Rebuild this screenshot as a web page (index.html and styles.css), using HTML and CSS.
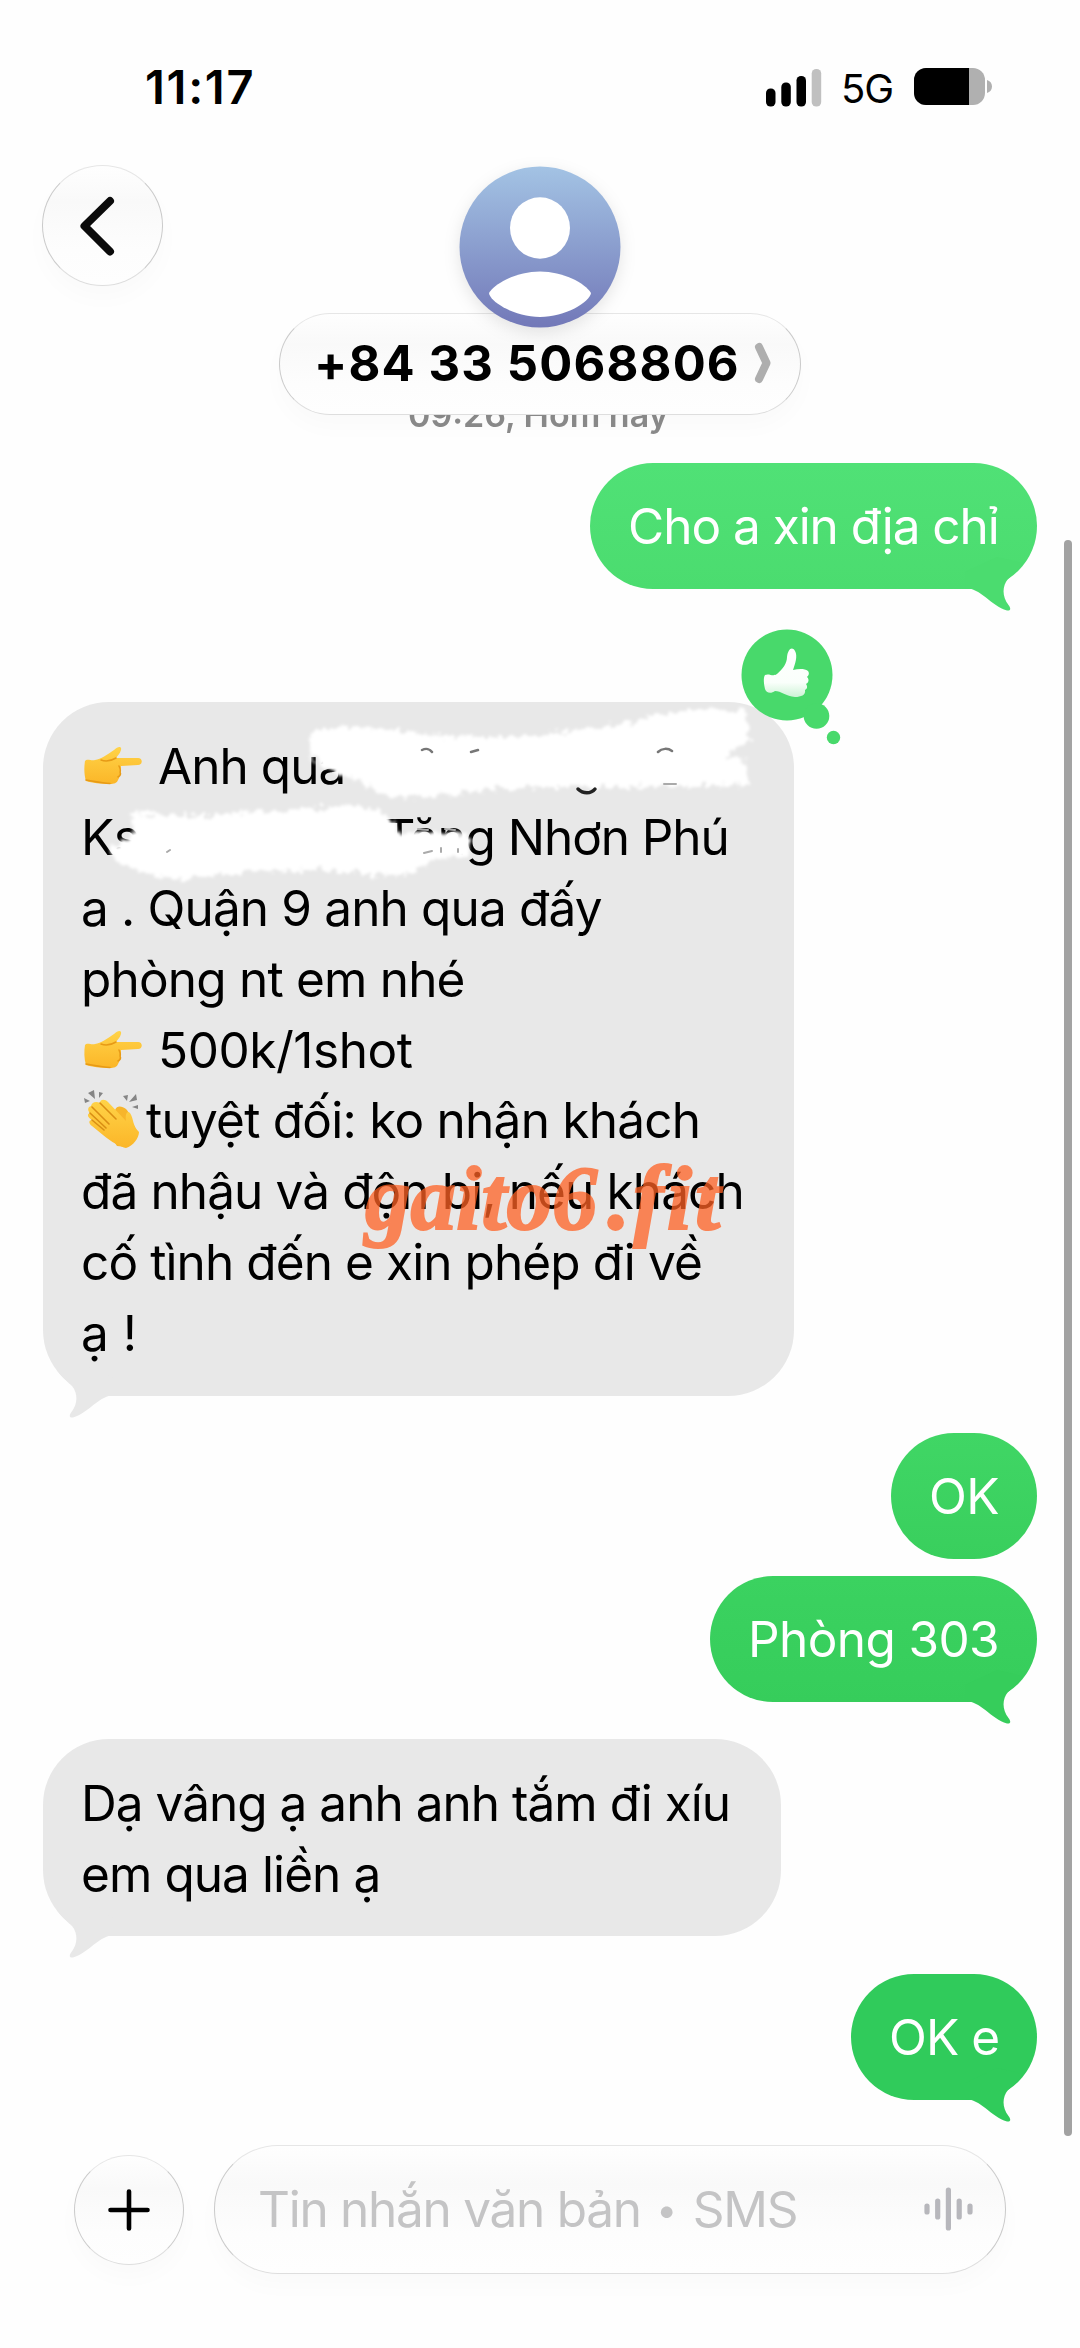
FILE: index.html
```html
<!DOCTYPE html>
<html lang="vi">
<head>
<meta charset="utf-8">
<title>Tin nhắn</title>
<link rel="stylesheet" href="styles.css">
</head>
<body>
<svg class="defs" width="0" height="0" aria-hidden="true">
  <defs>
    <linearGradient id="skin" x1="0" y1="0" x2="0" y2="1"><stop offset="0" stop-color="#ffd348"/><stop offset="1" stop-color="#fbb628"/></linearGradient>
    <linearGradient id="thumb" x1="0" y1="0" x2="0" y2="1"><stop offset="0" stop-color="#fff"/><stop offset=".7" stop-color="#fafffb"/><stop offset="1" stop-color="#cdf3d6"/></linearGradient>
    <linearGradient id="avatar" x1="0" y1="0" x2="0" y2="1"><stop offset="0" stop-color="#a3c3e4"/><stop offset="1" stop-color="#7278b8"/></linearGradient>
    <filter id="rough" x="-5%" y="-20%" width="110%" height="140%"><feTurbulence type="fractalNoise" baseFrequency=".13" numOctaves="3" seed="4"/><feDisplacementMap in="SourceGraphic" scale="15" xChannelSelector="R" yChannelSelector="G"/><feGaussianBlur stdDeviation="1.5"/></filter>
    <g id="tail"><path d="M8 36C24 36 34 54 50 58.5C54 59.300 54 56 51.500 53C45 45 45 34 51 27C56 22 62 18 66 11L40 5L8 20Z"/></g>
    <g id="point">
      <path fill="url(#skin)" d="M2 15C4 12 8 15 12 14C18 13 24 9 31 4C35 0 39 0 38 4C37 8 34 10 33 12H55C60 12 60 19 55 19L38 20C38 25 38 29 35 34C34 37 31 38 27 38C18 38 9 37 3 35C1 29 1 21 2 15Z"/>
      <path fill="none" stroke="#e79a16" stroke-width="1.500" stroke-linecap="round" d="M18 14C23 16 28 15 33 12M36 20C37 22 38 24 37 26C38 28 37 30 35 31M3 34C10 35 18 37 27 37.500"/>
    </g>
  </defs>
</svg>
<main class="phone">
  <div class="status">
    <span class="time">11:17</span>
    <div class="status-right">
      <svg class="signal" width="56" height="38" viewBox="0 0 56 38"><rect x="0" y="19.500" width="9.500" height="18" rx="4.500"/><rect x="15.300" y="13.500" width="9.500" height="24" rx="4.500"/><rect x="30.500" y="7" width="9.500" height="30.500" rx="4.500"/><rect x="45.700" y="0" width="9.500" height="37.500" rx="4.500" fill="#c0c0c0"/></svg>
      <span class="network">5G</span>
      <svg class="battery" width="80" height="37" viewBox="0 0 80 37"><rect width="71" height="37" rx="12" fill="#b0b0b0"/><path d="M12 0H55V37H12A12 12 0 0 1 0 25V12A12 12 0 0 1 12 0Z"/><path fill="#b0b0b0" d="M73 12C76 13 78 15 78 18.500S76 24 73 25Z"/></svg>
    </div>
  </div>
  <header class="header">
    <button class="glass back" aria-label="Quay lại"><svg width="40" height="62" viewBox="0 0 40 62"><path d="M31 6L5.500 31L31 56.500" fill="none" stroke="#0b0b0b" stroke-width="8" stroke-linecap="round" stroke-linejoin="round"/></svg></button>
    <div class="contact">
      <svg class="avatar" width="162" height="162" viewBox="0 0 162 162"><circle cx="81" cy="81" r="80.500" fill="url(#avatar)"/><ellipse cx="81" cy="62" rx="30" ry="30.700" fill="#fff"/><path fill="#fff" d="M30 127C36 117 58 105.500 81 105.500S126 117 132 127C131 136 106 151 81 151S31 136 30 127Z"/></svg>
      <div class="glass name"><span class="number">+84 33 5068806</span><svg width="18" height="42" viewBox="0 0 18 42"><path d="M5 5L12.500 21L5 37" fill="none" stroke="#aeaeae" stroke-width="8" stroke-linecap="round" stroke-linejoin="round"/></svg></div>
    </div>
  </header>
  <div class="stamp"><span>09:26, Hôm nay</span></div>
  <section class="thread">
    <div class="bubble sent s1"><span class="line l-cho">Cho a xin địa chỉ</span><svg class="tail" viewBox="0 0 80 60"><use href="#tail"/></svg></div>
    <div class="bubble got g1">
      <span class="line"><svg class="emoji" width="60" height="40" viewBox="0 0 60 40"><use href="#point"/></svg><span class="l1">Anh qua</span></span>
      <span class="line"><span class="l2a">Ks</span><span class="l2b">Tăng Nhơn Phú</span></span>
      <span class="line"><span class="l3">a . Quận 9 anh qua đấy</span></span>
      <span class="line"><span class="l4">phòng nt em nhé</span></span>
      <span class="line"><svg class="emoji" width="60" height="40" viewBox="0 0 60 40"><use href="#point"/></svg><span class="l5">500k/1shot</span></span>
      <span class="line"><svg class="emoji clap" width="60" height="60" viewBox="0 0 60 60">
        <path fill="#858585" d="M1 8L7 11L2 13ZM5 3L11 0L12 9ZM16 2L20 3L16 8ZM40 6L45 5L44 11ZM53 4L54 10L46 12ZM49 17L55 15V19Z"/>
        <path fill="#f7b52b" d="M32 20C34 15 39 16 43 19C48 24 48 33 55 42L44 57L34 56L30 50Z"/>
        <path fill="url(#skin)" d="M8 16C9 12 13 11 17 13C17 9 22 9 25 12L43 31C42 24 44 20 47 23C51 29 49 35 56 42C56 48 50 56 43 58C38 57 28 52 20 45L9 36C5 33 6 30 9 30C4 27 4 24 7 23C4 20 5 17 8 16Z"/>
        <path fill="none" stroke="#d98e14" stroke-width="1.600" stroke-linecap="round" d="M9 17L26 34M17 13L33 29M7 23L23 38M9 30L21 40"/></svg><span class="l6">tuyệt đối: ko nhận khách</span></span>
      <span class="line"><span class="l7">đã nhậu và độn bi, nếu khách</span></span>
      <span class="line"><span class="l8">cố tình đến e xin phép đi về</span></span>
      <span class="line"><span class="l9">ạ !</span></span>
      <svg class="tail" viewBox="0 0 80 60"><use href="#tail"/></svg>
      <svg class="scribble" width="751" height="200" viewBox="43 702 751 200">
        <g filter="url(#rough)" fill="#fff">
          <path d="M310 732C334 722 385 728 440 735C500 741 560 732 630 722C665 708 715 708 748 712L750 740L725 756L748 762V785C690 787 640 786 560 787C500 788 460 792 420 797C385 800 372 794 366 782C350 776 330 775 312 757Z"/>
          <path d="M130 812C170 820 260 812 345 806C375 803 392 815 396 832L468 834L470 856L430 860C415 876 390 880 350 872C290 866 230 874 172 880C145 872 116 868 108 850C121 842 134 838 134 832Z"/>
        </g>
        <g fill="none" stroke="#222" stroke-linecap="round" stroke-width="3.500"><path d="M578 789C583 794 591 794 595 789"/><path stroke="#777" stroke-width="2.500" d="M658 752C662 748 668 748 672 751M422 750C426 748 430 749 432 752M471 752L478 750"/><path stroke="#aaa" stroke-width="2" d="M418 829L428 830M445 829L455 830M424 853L432 851M441 852V848M458 852V849M167 852L170 850M664 784H676"/></g>
      </svg>
      <svg class="reaction" width="100" height="116" viewBox="0 0 100 116"><g fill="#48d96b"><circle cx="46" cy="46" r="45.500"/><circle cx="75.500" cy="87" r="12.800"/><circle cx="92.500" cy="108.500" r="6.700"/></g><path fill="url(#thumb)" d="M24 46C28 44 32 48 36 45C42 40 46 34 46 28C47 20 51 17 54 22C57 27 54 35 52 41C57 40 63 39 67 42C69 45 67 47 66 48C69 51 67 54 65 55C67 58 66 60 64 61C65 66 60 68 54 68C45 67 40 62 34 62C30 65 25 64 24 60C23 55 22 49 24 46Z"/></svg>
      <span class="watermark">gaito6<span class="suffix">.fit</span></span>
    </div>
    <div class="bubble sent s2"><span class="line l-ok">OK</span></div>
    <div class="bubble sent s3"><span class="line l-ph">Phòng 303</span><svg class="tail" viewBox="0 0 80 60"><use href="#tail"/></svg></div>
    <div class="bubble got g2"><span class="line"><span class="m1">Dạ vâng ạ anh anh tắm đi xíu</span></span><span class="line"><span class="m2">em qua liền ạ</span></span><svg class="tail" viewBox="0 0 80 60"><use href="#tail"/></svg></div>
    <div class="bubble sent s4"><span class="line l-oke">OK e</span><svg class="tail" viewBox="0 0 80 60"><use href="#tail"/></svg></div>
  </section>
  <footer class="composer">
    <button class="glass plus" aria-label="Thêm"><svg width="48" height="48" viewBox="0 0 48 48"><path d="M24 5.500V42.500M5.500 24H42.500" stroke="#000" stroke-width="4.600" stroke-linecap="round"/></svg></button>
    <div class="glass field"><span class="placeholder">Tin nhắn văn bản <span class="dot">•</span> SMS</span><svg width="50" height="46" viewBox="0 0 50 46"><path d="M4 20V26M14.700 15V31M25.400 4V42M36.200 15V31M47 20V26" stroke="#b7b7bc" stroke-width="5.200" stroke-linecap="round"/></svg></div>
  </footer>
  <div class="scrollbar"></div>
</main>
</body>
</html>
```
FILE: styles.css
```css
* { box-sizing: border-box; }
body { margin: 0; background: #fefefe; color: #000; font-family: Inter, "Noto Sans", sans-serif; }
button { padding: 0; font: inherit; }
svg { display: block; flex: none; }
.defs { position: absolute; }
.phone { position: relative; display: flex; flex-direction: column; width: 1080px; height: 2348px; overflow: hidden; }
.status { display: flex; justify-content: space-between; height: 165px; padding: 68px 86px 0 145px; }
.time { font-size: 47px; font-weight: 600; line-height: 38px; letter-spacing: 1.700px; }
.status-right { display: flex; align-items: flex-start; }
.signal { margin-top: 1px; }
.network { width: 52px; margin: 2px 21px 0 19.500px; font-size: 40px; line-height: 38px; letter-spacing: -1px; }
.glass { border: 1px solid #cacaca; border-top-color: #e6e6e6; border-bottom-color: #dedede; background: linear-gradient(#fefefe, #f9f9f9 30%, #fdfdfd 70%, #fefefe); box-shadow: 0 12px 24px rgba(0, 0, 0, .018); }
.header { display: flex; height: 250px; padding-left: 42px; }
.back { display: flex; width: 121px; height: 121px; padding-left: 36px; align-items: center; border-radius: 50%; }
.contact { display: flex; flex-direction: column; align-items: center; width: 522px; margin-left: 116px; padding-top: 1px; position: relative; z-index: 2; }
.avatar { position: relative; z-index: 1; filter: drop-shadow(0 5px 8px rgba(0, 0, 0, .1)); }
.name { display: flex; align-items: center; justify-content: space-between; width: 522px; height: 102px; margin-top: -15px; padding: 0 28px 2px 34px; border-radius: 51px; }
.number { font-size: 49px; font-weight: 700; letter-spacing: 1.160px; white-space: nowrap; }
.stamp { height: 48px; margin-top: -17px; padding-left: 408px; color: #8a8a8a; font-size: 34px; font-weight: 600; line-height: 33px; filter: blur(.6px); white-space: nowrap; }
.thread { display: flex; flex-direction: column; height: 1699px; padding: 17px 43px 0; }
.bubble { position: relative; font-size: 49.500px; }
.line { display: flex; align-items: center; height: 71px; white-space: pre; }
.sent { align-self: flex-end; height: 126px; padding: 27.500px 0 0 38px; border-radius: 63px; color: #fff; }
.got { align-self: flex-start; border-radius: 66px; background: #e8e8e8; padding: 28.500px 0 0 38px; }
.got .line { height: 70.900px; }
.tail { position: absolute; right: 0; bottom: -23px; width: 80px; height: 60px; }
.got .tail { right: auto; left: 0; transform: scaleX(-1); fill: #e8e8e8; }
.s1 { width: 447px; background: linear-gradient(#50e176, #4bdc6f); }
.s1 .tail { fill: #4bdc6f; }
.g1 { width: 751px; height: 694px; margin-top: 113px; }
.s2 { width: 146px; margin-top: 36.500px; background: linear-gradient(#40d665, #39cf5d); }
.s3 { width: 327px; margin-top: 17px; background: linear-gradient(#3bd260, #36cd5b); }
.s3 .tail { fill: #36cd5b; }
.g2 { width: 738px; height: 197px; margin-top: 37.500px; }
.s4 { width: 186px; margin-top: 37.500px; background: #30cb5b; }
.s4 .tail { fill: #30cb5b; }
.l-cho { letter-spacing: -1.020px; }
.l1 { letter-spacing: -.950px; }
.l2a { letter-spacing: -.500px; }
.l2b { margin-left: 244px; letter-spacing: -1.050px; }
.l3 { letter-spacing: -.850px; }
.l4 { letter-spacing: -.800px; }
.l5 { letter-spacing: -.450px; }
.l6 { letter-spacing: -.750px; }
.l7 { letter-spacing: -.880px; }
.l8 { letter-spacing: -.900px; }
.l-ok { letter-spacing: -.500px; }
.l-ph { letter-spacing: -.600px; }
.l-oke { letter-spacing: -.900px; }
.m1 { letter-spacing: -.970px; }
.m2 { letter-spacing: -.920px; }
.emoji { margin-left: 2px; margin-right: 15px; }
.clap { margin-right: 3px; }
.scribble { position: absolute; left: 0; top: 0; overflow: visible; }
.reaction { position: absolute; left: 698px; top: -73px; }
.watermark { position: absolute; left: 322px; top: 447px; color: #ff6224; opacity: .750; font: italic 700 91px/100px "Liberation Serif", serif; -webkit-text-stroke: 2px #ff6224; paint-order: stroke; white-space: nowrap; }
.suffix { margin-left: 10px; letter-spacing: 3px; }
.composer { display: flex; align-items: center; gap: 30px; height: 129px; padding-left: 74px; }
.plus { display: flex; width: 110px; height: 110px; align-items: center; justify-content: center; border-radius: 50%; }
.field { display: flex; align-items: center; justify-content: space-between; width: 792px; height: 129px; padding: 0 32px 2px 43px; border-radius: 64px; }
.placeholder { color: #c4c4c5; font-size: 49.500px; letter-spacing: -1.260px; white-space: nowrap; }
.dot { display: inline-block; transform: scale(.750); }
.scrollbar { position: absolute; right: 8px; top: 540px; width: 8px; height: 1596px; border-radius: 4px; background: #a2a2a2; }
```
